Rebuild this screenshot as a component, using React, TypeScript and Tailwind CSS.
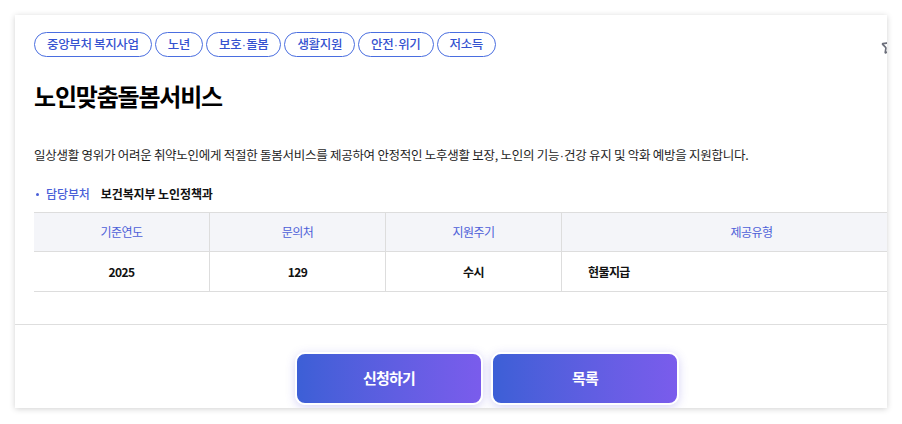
import { Star } from 'lucide-react';

const TAGS = ['중앙부처 복지사업', '노년', '보호·돌봄', '생활지원', '안전·위기', '저소득'];

const COLUMNS = [
  { head: '기준연도', value: '2025', w: 'w-[176px]', align: 'justify-center' },
  { head: '문의처', value: '129', w: 'w-[176px]', align: 'justify-center' },
  { head: '지원주기', value: '수시', w: 'w-[176px]', align: 'justify-center' },
  { head: '제공유형', value: '현물지급', w: 'flex-1', align: 'justify-start pl-[26px]' },
];

// The CJK middle dot is full width; take it from a latin font so it sits tight
function Dotted({ text }: { text: string }) {
  const parts = text.split('·');
  return (
    <>
      {parts.map((p, i) => (
        <span key={i}>
          {i > 0 && <span className="font-['Liberation_Sans'] px-[0.5px]">·</span>}
          {p}
        </span>
      ))}
    </>
  );
}

export default function App() {
  return (
    <div
      className="w-[902px] h-[424px] bg-white pt-[15px] pl-[15px]"
      style={{ fontFamily: '"Noto Sans CJK KR", "Noto Sans", sans-serif' }}
    >
      {/* ── Card (inner content is wider than the visible box) ───────────── */}
      <div className="relative w-[872px] h-[393px] bg-white overflow-hidden shadow-[0_1px_6px_rgba(0,0,0,0.18)]">
        <div className="w-[944px] flex flex-col">
          <div className="relative pl-[19px] pr-[18px] pt-[17px]">
            {/* Tags */}
            <div className="flex gap-[3px]">
              {TAGS.map((t) => (
                <span
                  key={t}
                  className="h-[25px] px-[12px] flex items-center rounded-full border border-[#4a6ee0] text-[12.5px] font-medium tracking-[-0.35px] text-[#3552d0]"
                >
                  <Dotted text={t} />
                </span>
              ))}
            </div>
            <Star className="absolute left-[866px] top-[22px] w-[18px] h-[18px] text-[#6b6e7a]" strokeWidth={2.2} />

            {/* Title */}
            <h1 className="mt-[22px] text-[24px] leading-[34px] font-bold tracking-[-1.2px] text-black">
              노인맞춤돌봄서비스
            </h1>

            {/* Description */}
            <p className="mt-[33px] text-[12.5px] leading-[18px] tracking-[-0.27px] text-[#1e1e1e]">
              <Dotted text="일상생활 영위가 어려운 취약노인에게 적절한 돌봄서비스를 제공하여 안정적인 노후생활 보장, 노인의 기능·건강 유지 및 악화 예방을 지원합니다." />
            </p>

            {/* Department */}
            <div className="mt-[20px] flex items-center text-[12px] leading-[18px] tracking-[-0.1px]">
              <span className="w-[3px] h-[3px] rounded-full bg-[#4a5fd8] ml-[2px] mr-[7px]" />
              <span className="text-[#4a5fd8] font-medium">담당부처</span>
              <span className="ml-[11px] font-semibold text-[#111]">보건복지부 노인정책과</span>
            </div>

            {/* Table */}
            <div className="mt-[9px] border-t border-b border-[#dddddd] text-[12px] tracking-[-0.6px]">
              <div className="flex h-[39px] bg-[#f4f5f9] border-b border-[#dddddd]">
                {COLUMNS.map((c, i) => (
                  <div
                    key={c.head}
                    className={`${c.w} flex items-center justify-center text-[#4d60d8] ${i < 3 ? 'border-r border-[#dddddd]' : ''}`}
                  >
                    {c.head}
                  </div>
                ))}
              </div>
              <div className="flex h-[39px]">
                {COLUMNS.map((c, i) => (
                  <div
                    key={c.head}
                    className={`${c.w} flex items-center ${c.align} font-semibold text-[#111] ${i < 3 ? 'border-r border-[#dddddd]' : ''}`}
                  >
                    {c.value}
                  </div>
                ))}
              </div>
            </div>
          </div>

          {/* Divider */}
          <div className="mt-[32px] h-px bg-[#dedede]" />

          {/* Actions */}
          <div className="mt-[27px] flex justify-center gap-[8px]">
            {['신청하기', '목록'].map((label) => (
              <button
                key={label}
                className="w-[188px] h-[53px] rounded-[10px] border-2 border-white bg-gradient-to-r from-[#3c5fd6] to-[#7a5cec] text-white text-[15px] font-bold tracking-[-0.8px] shadow-[0_2px_10px_rgba(90,80,220,0.25)]"
              >
                {label}
              </button>
            ))}
          </div>
        </div>
      </div>
    </div>
  );
}
